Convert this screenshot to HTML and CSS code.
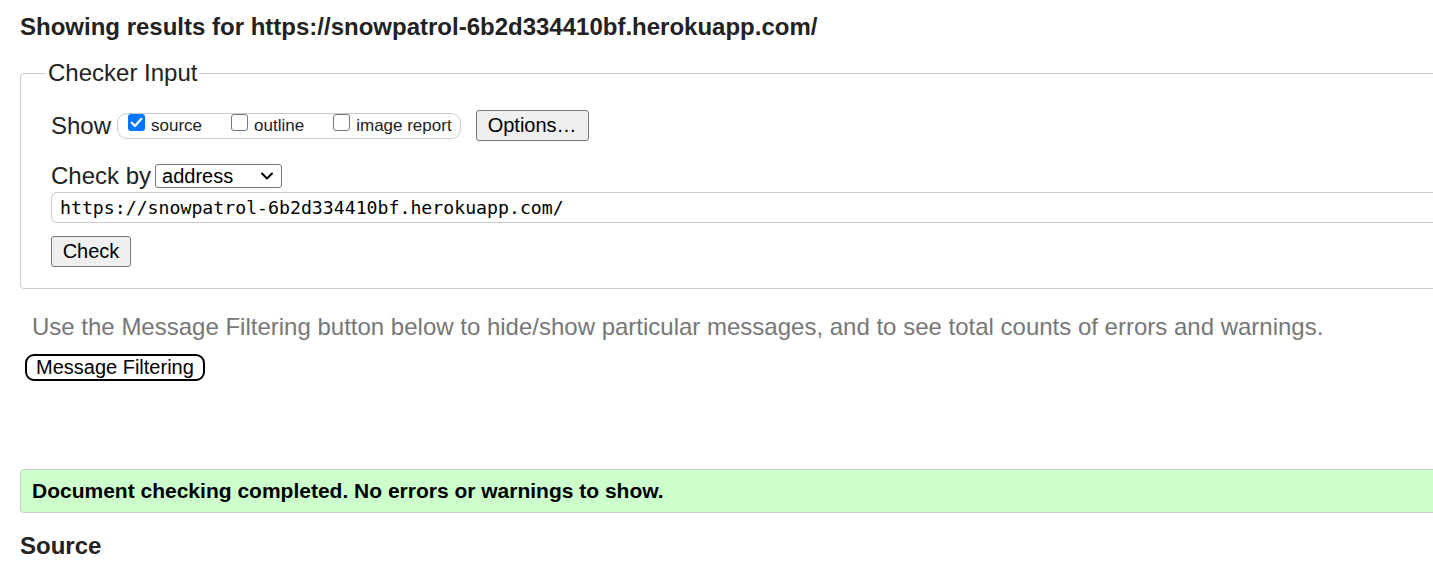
FILE: index.html
```html
<!DOCTYPE html>
<html lang="en">
<head>
<meta charset="utf-8">
<title>Showing results for https://snowpatrol-6b2d334410bf.herokuapp.com/</title>
<link rel="stylesheet" href="styles.css">
</head>
<body>
<div class="page">
  <h2 class="results-title">Showing results for https://snowpatrol-6b2d334410bf.herokuapp.com/</h2>
  <fieldset class="checker">
    <legend class="checker-legend">Checker Input</legend>
    <div class="row show-row">
      <span class="row-label">Show</span>
      <span class="show-group">
        <label class="opt"><span class="cb cb-on"><svg viewBox="0 0 17 17" width="17" height="17"><path d="M3.8 8.8 L7 12 L13.2 4.9" fill="none" stroke="#fff" stroke-width="2.3" stroke-linecap="round" stroke-linejoin="round"/></svg></span><span class="opt-text">source</span></label>
        <label class="opt"><span class="cb"></span><span class="opt-text">outline</span></label>
        <label class="opt"><span class="cb"></span><span class="opt-text">image report</span></label>
      </span>
      <span class="btn btn-options">Options…</span>
    </div>
    <div class="row checkby-row">
      <span class="row-label">Check by</span>
      <span class="select">address<svg class="chev" viewBox="0 0 14 10" width="14" height="10"><path d="M2 2.5 L7 7.5 L12 2.5" fill="none" stroke="#000" stroke-width="2" stroke-linecap="round" stroke-linejoin="round"/></svg></span>
    </div>
    <div class="url-input">https://snowpatrol-6b2d334410bf.herokuapp.com/</div>
    <div class="row check-row"><span class="btn btn-check">Check</span></div>
  </fieldset>
  <p class="filter-hint">Use the Message Filtering button below to hide/show particular messages, and to see total counts of errors and warnings.</p>
  <div class="btn-filter">Message Filtering</div>
  <div class="success">Document checking completed. No errors or warnings to show.</div>
  <h2 class="source-title">Source</h2>
</div>
</body>
</html>
```

FILE: styles.css
```css
html, body {
  margin: 0;
  padding: 0;
  overflow: hidden;
  background: #fff;
}
body {
  font-family: "Liberation Sans", Arial, sans-serif;
  color: #222;
}
.page {
  width: 1600px;
  padding: 13px 0 0 20px;
}
.results-title {
  margin: 0;
  font-size: 24px;
  font-weight: bold;
  line-height: 28px;
  color: #222;
}
.checker {
  margin: 18px 0 0 0;
  padding: 10px 30px 21px 30px;
  border: 1px solid #ccc;
  border-radius: 4px;
  width: 1500px;
  box-sizing: border-box;
}
.checker-legend {
  font-size: 24px;
  padding: 0 2px;
  margin-left: -5px;
  color: #222;
  line-height: 28px;
}
.row {
  display: flex;
  align-items: center;
}
.row-label {
  font-size: 24px;
  color: #222;
}
.show-row {
  height: 31px;
  margin-top: 13px;
}
.show-group {
  display: flex;
  align-items: center;
  margin-left: 6px;
  height: 26px;
  box-sizing: border-box;
  padding: 0 8px 0 10px;
  border: 1px solid #ccc;
  border-radius: 10px;
}
.opt {
  display: flex;
  align-items: center;
  margin-right: 29px;
}
.opt:last-child { margin-right: 0; }
.cb {
  width: 17px;
  height: 17px;
  box-sizing: border-box;
  border: 1px solid #767676;
  border-radius: 3px;
  background: #fff;
  margin-top: -6px;
  display: inline-flex;
  overflow: hidden;
}
.cb-on {
  background: #0075ff;
  border: 0;
}
.opt-text {
  font-size: 17px;
  margin-left: 6px;
  color: #222;
}
.btn {
  display: inline-flex;
  align-items: center;
  justify-content: center;
  box-sizing: border-box;
  background: #efefef;
  border: 1px solid #767676;
  border-radius: 3px;
  font-size: 20px;
  color: #000;
}
.btn-options {
  margin-left: 15px;
  width: 113px;
  height: 31px;
}
.checkby-row {
  margin-top: 21px;
  height: 28px;
}
.select {
  margin-left: 4px;
  width: 127px;
  height: 24px;
  box-sizing: border-box;
  border: 1px solid #767676;
  border-radius: 3px;
  display: inline-flex;
  align-items: center;
  justify-content: space-between;
  padding: 0 7px 0 6px;
  font-size: 20px;
  color: #000;
}
.chev { display: block; }
.url-input {
  margin-top: 2px;
  height: 31px;
  box-sizing: border-box;
  border: 1px solid #ccc;
  border-radius: 6px;
  padding: 0 8px;
  display: flex;
  align-items: center;
  font-family: "DejaVu Sans Mono", monospace;
  font-size: 18.2px;
  color: #000;
}
.check-row {
  margin-top: 13px;
}
.btn-check {
  width: 80px;
  height: 31px;
}
.filter-hint {
  margin: 24px 0 0 12px;
  font-size: 24px;
  line-height: 28px;
  color: #777;
}
.btn-filter {
  width: max-content;
  margin: 13px 0 0 5px;
  box-sizing: border-box;
  height: 27px;
  padding: 0 9px;
  border: 2px solid #000;
  border-radius: 9px;
  font-size: 20px;
  line-height: 23px;
  color: #000;
  background: #fff;
}
.success {
  margin-top: 88px;
  width: 1500px;
  height: 44px;
  box-sizing: border-box;
  background: #ccffcc;
  border: 1px solid #ccc;
  border-radius: 4px;
  padding: 0 11px;
  display: flex;
  align-items: center;
  font-size: 21px;
  font-weight: bold;
  color: #000;
}
.source-title {
  margin: 19px 0 0 0;
  font-size: 24px;
  font-weight: bold;
  line-height: 28px;
  color: #222;
}
```
